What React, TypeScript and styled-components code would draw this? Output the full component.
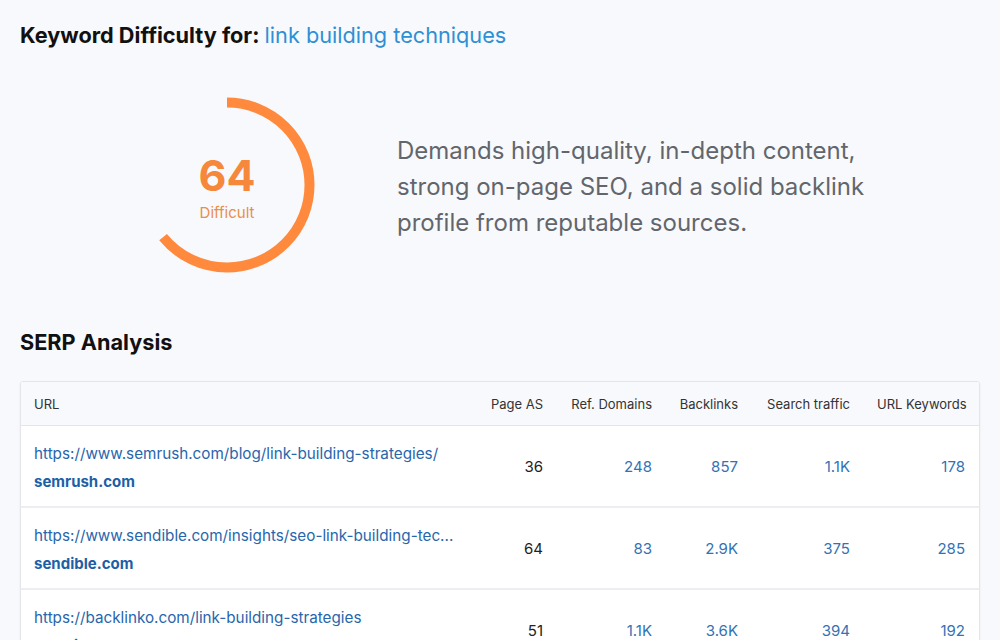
import React from "react";
import styled, { createGlobalStyle } from "styled-components";

const Global = createGlobalStyle`
  html, body { margin: 0; padding: 0; background: #f8f9fc; }
  body { font-family: Inter, "Noto Sans", sans-serif; color: #111; }
`;

const Page = styled.div`
  width: 1000px;
  height: 640px;
  overflow: hidden;
  padding: 21px 20px 0 19px;
  box-sizing: border-box;
`;

const Title = styled.h1`
  margin: 0 0 0 1px;
  font-size: 21.7px;
  line-height: 28px;
  font-weight: 700;
  color: #111;
`;

const Keyword = styled.span`
  font-weight: 400;
  color: #2f8fd5;
`;

const ScoreRow = styled.div`
  display: flex;
  align-items: center;
  margin-top: 46px;
  padding-left: 118px;
  gap: 80px;
`;

const Gauge = styled.div`
  position: relative;
  width: 180px;
  height: 180px;
  flex: none;
`;

const GaugeLabel = styled.div`
  position: absolute;
  inset: 0;
  display: flex;
  flex-direction: column;
  align-items: center;
  justify-content: center;
  padding-top: 4px;
`;

const Score = styled.div`
  font-size: 43px;
  line-height: 48px;
  font-weight: 700;
  color: #f5883b;
`;

const ScoreText = styled.div`
  font-size: 15px;
  line-height: 20px;
  margin-top: 4px;
  color: #e98f48;
`;

const Description = styled.p`
  margin: 4px 0 0;
  font-size: 24px;
  line-height: 36px;
  color: #62666c;
  max-width: 480px;
`;

const SectionTitle = styled.h2`
  margin: 53px 0 0 1px;
  font-size: 21.7px;
  line-height: 28px;
  font-weight: 700;
  color: #111;
`;

const TableCard = styled.div`
  margin-top: 25px;
  margin-left: 1px;
  background: #fff;
  border: 1px solid #e3e5ea;
  border-radius: 3px;
  box-shadow: 0 1px 3px rgba(20, 30, 60, 0.05);
  overflow: hidden;
`;

const Table = styled.table`
  width: 100%;
  border-collapse: collapse;
  table-layout: fixed;
`;

const HeadCell = styled.th<{ $align?: string }>`
  background: #f8f9fc;
  height: 43px;
  padding: 0 14px 0 13px;
  font-size: 13px;
  font-weight: 400;
  color: #333;
  text-align: ${(p) => p.$align || "right"};
  border-bottom: 1px solid #e3e5ea;
  white-space: nowrap;
`;

const Row = styled.tr`
  & + & td { border-top: 2px solid #eceef2; }
`;

const Cell = styled.td<{ $blue?: boolean }>`
  height: 80px;
  padding: 0 14px;
  font-size: 15px;
  text-align: right;
  color: ${(p) => (p.$blue ? "#3272b5" : "#222")};
  vertical-align: middle;
`;

const UrlCell = styled.td`
  height: 76px;
  padding: 4px 14px 0 13px;
  vertical-align: middle;
`;

const Url = styled.div`
  font-size: 15.25px;
  line-height: 20px;
  color: #2866ac;
  white-space: nowrap;
  overflow: hidden;
`;

const Domain = styled.div`
  font-size: 15px;
  line-height: 20px;
  margin-top: 8px;
  font-weight: 700;
  color: #1d5fa6;
`;

const rows = [
  {
    url: "https://www.semrush.com/blog/link-building-strategies/",
    domain: "semrush.com",
    as: "36",
    rd: "248",
    bl: "857",
    st: "1.1K",
    kw: "178",
  },
  {
    url: "https://www.sendible.com/insights/seo-link-building-tec...",
    domain: "sendible.com",
    as: "64",
    rd: "83",
    bl: "2.9K",
    st: "375",
    kw: "285",
  },
  {
    url: "https://backlinko.com/link-building-strategies",
    domain: "backlinko.com",
    as: "51",
    rd: "1.1K",
    bl: "3.6K",
    st: "394",
    kw: "192",
  },
];

const R = 82.5;
const C = 2 * Math.PI * R;

export default function App() {
  return (
    <>
      <Global />
      <Page>
        <Title>
          Keyword Difficulty for: <Keyword>link building techniques</Keyword>
        </Title>
        <ScoreRow>
          <Gauge>
            <svg width="180" height="180" viewBox="0 0 180 180">
              <circle
                cx="90"
                cy="90"
                r={R}
                fill="none"
                stroke="#ff8a3d"
                strokeWidth="10"
                strokeDasharray={`${C * 0.64} ${C}`}
                transform="rotate(-90 90 90)"
              />
            </svg>
            <GaugeLabel>
              <Score>64</Score>
              <ScoreText>Difficult</ScoreText>
            </GaugeLabel>
          </Gauge>
          <Description>
            Demands high-quality, in-depth content, strong on-page SEO, and a solid backlink
            profile from reputable sources.
          </Description>
        </ScoreRow>
        <SectionTitle>SERP Analysis</SectionTitle>
        <TableCard>
          <Table>
            <colgroup>
              <col style={{ width: 456 }} />
              <col style={{ width: 80 }} />
              <col style={{ width: 109 }} />
              <col style={{ width: 86 }} />
              <col style={{ width: 112 }} />
              <col />
            </colgroup>
            <thead>
              <tr>
                <HeadCell $align="left">URL</HeadCell>
                <HeadCell>Page AS</HeadCell>
                <HeadCell>Ref. Domains</HeadCell>
                <HeadCell>Backlinks</HeadCell>
                <HeadCell>Search traffic</HeadCell>
                <HeadCell>URL Keywords</HeadCell>
              </tr>
            </thead>
            <tbody>
              {rows.map((r) => (
                <Row key={r.domain}>
                  <UrlCell>
                    <Url>{r.url}</Url>
                    <Domain>{r.domain}</Domain>
                  </UrlCell>
                  <Cell>{r.as}</Cell>
                  <Cell $blue>{r.rd}</Cell>
                  <Cell $blue>{r.bl}</Cell>
                  <Cell $blue>{r.st}</Cell>
                  <Cell $blue>{r.kw}</Cell>
                </Row>
              ))}
            </tbody>
          </Table>
        </TableCard>
      </Page>
    </>
  );
}
